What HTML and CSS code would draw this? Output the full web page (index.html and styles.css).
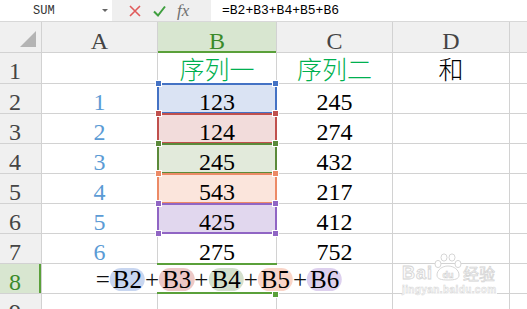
FILE: index.html
```html
<!DOCTYPE html>
<html lang="zh-CN">
<head>
<meta charset="utf-8">
<title>SUM</title>
<link rel="stylesheet" href="styles.css">
</head>
<body>
<div class="app">
  <div class="fbar">
    <div class="namebox"><span class="nb-text">SUM</span><span class="nb-arrow"></span></div>
    <div class="fbtns">
      <svg class="ic-x" width="12" height="12" viewBox="0 0 12 12"><path d="M1 1L11 11M11 1L1 11" stroke="#e05a5a" stroke-width="1.6" fill="none"/></svg>
      <svg class="ic-ok" width="13" height="12" viewBox="0 0 13 12"><path d="M1 6.5L5 10.5L12 1.5" stroke="#3f9f3f" stroke-width="2" fill="none"/></svg>
      <span class="fx">fx</span>
    </div>
    <div class="finput">=B2+B3+B4+B5+B6</div>
  </div>

  <div class="sheet">
    <div class="corner"><span class="tri"></span></div>
    <div class="ch">A</div>
    <div class="ch sel">B</div>
    <div class="ch">C</div>
    <div class="ch">D</div>
    <div class="ch"></div>

    <div class="rh">1</div>
    <div class="c"></div>
    <div class="c cjk green">序列一</div>
    <div class="c cjk green">序列二</div>
    <div class="c cjk">和</div>
    <div class="c"></div>

    <div class="rh">2</div>
    <div class="c a">1</div>
    <div class="c ref blue">123<i class="hd tl"></i><i class="hd tr"></i><i class="hd bl"></i><i class="hd br"></i></div>
    <div class="c">245</div>
    <div class="c"></div>
    <div class="c"></div>

    <div class="rh">3</div>
    <div class="c a">2</div>
    <div class="c ref red">124<i class="hd tl"></i><i class="hd tr"></i><i class="hd bl"></i><i class="hd br"></i></div>
    <div class="c">274</div>
    <div class="c"></div>
    <div class="c"></div>

    <div class="rh">4</div>
    <div class="c a">3</div>
    <div class="c ref grn">245<i class="hd tl"></i><i class="hd tr"></i><i class="hd bl"></i><i class="hd br"></i></div>
    <div class="c">432</div>
    <div class="c"></div>
    <div class="c"></div>

    <div class="rh">5</div>
    <div class="c a">4</div>
    <div class="c ref org">543<i class="hd tl"></i><i class="hd tr"></i><i class="hd bl"></i><i class="hd br"></i></div>
    <div class="c">217</div>
    <div class="c"></div>
    <div class="c"></div>

    <div class="rh">6</div>
    <div class="c a">5</div>
    <div class="c ref pur">425<i class="hd tl"></i><i class="hd tr"></i><i class="hd bl"></i><i class="hd br"></i></div>
    <div class="c">412</div>
    <div class="c"></div>
    <div class="c"></div>

    <div class="rh">7</div>
    <div class="c a">6</div>
    <div class="c">275</div>
    <div class="c">752</div>
    <div class="c"></div>
    <div class="c"></div>

    <div class="rh sel">8</div>
    <div class="c"></div>
    <div class="c active">
      <div class="editor">
        <span class="op">=</span><span class="pill p-blue">B2</span><span class="op">+</span><span class="pill p-red">B3</span><span class="op">+</span><span class="pill p-grn">B4</span><span class="op">+</span><span class="pill p-org">B5</span><span class="op">+</span><span class="pill p-pur">B6</span>
      </div>
      <i class="fill"></i>
    </div>
    <div class="c"></div>
    <div class="c"></div>
    <div class="c"></div>

    <div class="rh">9</div>
    <div class="c"></div>
    <div class="c"></div>
    <div class="c"></div>
    <div class="c"></div>
    <div class="c"></div>
  </div>

  <div class="wm">
    <div class="wm-top">
      <span class="wm-bai">Bai</span>
      <svg class="wm-paw" width="30" height="28" viewBox="0 0 30 28">
        <g fill="#fff" stroke="#d6d6d6" stroke-width="1">
          <ellipse cx="5" cy="11" rx="3" ry="3.6"/>
          <ellipse cx="11" cy="4.5" rx="3" ry="3.6"/>
          <ellipse cx="19" cy="4.5" rx="3" ry="3.6"/>
          <ellipse cx="25" cy="11" rx="3" ry="3.6"/>
          <path d="M4 22C4 17 9 13 15 13C21 13 26 17 26 22C26 26 22 27 15 27C8 27 4 26 4 22Z"/>
        </g>
        <text x="15" y="25" text-anchor="middle" class="wm-du">du</text>
      </svg>
      <span class="wm-jy">经验</span>
    </div>
    <div class="wm-url">jingyan.baidu.com</div>
  </div>
</div>
</body>
</html>
```

FILE: styles.css
```css
html, body {
  margin: 0;
  padding: 0;
  background: #fff;
  overflow: hidden;
}

.app {
  position: relative;
  width: 527px;
  height: 309px;
  overflow: hidden;
}

/* formula bar */
.fbar {
  display: flex;
  height: 21px;
  background: #fff;
}

.namebox {
  width: 112px;
  display: flex;
  align-items: center;
}

.nb-text {
  font: 12px "Liberation Mono", monospace;
  color: #333;
  margin-left: 33px;
}

.nb-arrow {
  margin-left: auto;
  margin-right: 4px;
  width: 0;
  height: 0;
  border-left: 3px solid transparent;
  border-right: 3px solid transparent;
  border-top: 3px solid #666;
}

.fbtns {
  width: 99px;
  background: #efefef;
  display: flex;
  align-items: center;
  padding-left: 17px;
  box-sizing: border-box;
}

.ic-x { margin-right: 12px; }
.ic-ok { margin-right: 11px; }

.fx {
  font: italic 17px "Liberation Serif", serif;
  color: #707070;
  line-height: 21px;
}

.finput {
  flex: 1;
  padding-left: 11px;
  font: 13px "Liberation Mono", monospace;
  line-height: 22px;
  color: #000;
}

/* sheet grid */
.sheet {
  display: grid;
  grid-template-columns: 41px 115px 118px 115px 116px 1fr;
  grid-template-rows: 30px 30px repeat(8, 29px);
  gap: 1px;
  background: #d2d2d2;
  border-top: 1px solid #d8d8d8;
}

.corner {
  background: #f0f0f0;
  display: flex;
  justify-content: flex-end;
  align-items: flex-end;
  padding: 0 5px 5px 0;
}

.tri {
  width: 16px;
  height: 16px;
  background: #b4b4b4;
  clip-path: polygon(100% 0, 100% 100%, 0 100%);
}

.ch {
  background: #f0f0f0;
  color: #444;
  font: 24px "Liberation Serif", serif;
  line-height: 22px;
  padding-top: 8px;
  text-align: center;
}

.ch.sel {
  position: relative;
  background: #d8e6d0;
  color: #3a8a2a;
}

.ch.sel::after {
  content: "";
  position: absolute;
  left: 0;
  right: 0;
  bottom: -1px;
  height: 2px;
  background: #5aa03a;
}

.rh {
  background: #f0f0f0;
  color: #444;
  font: 24px "Liberation Serif", serif;
  line-height: 22px;
  padding-top: 7px;
  padding-left: 9px;
  white-space: nowrap;
}

.rh.sel {
  background: #d8e6d0;
  color: #3a8a2a;
  box-shadow: inset -2px 0 #5aa03a;
}

.c {
  background: #fff;
  color: #000;
  font: 24px "Liberation Serif", serif;
  line-height: 22px;
  padding-top: 7px;
  text-align: center;
  white-space: nowrap;
}

.c.a { color: #5b9bd5; }

.c.cjk {
  font: 25px "Noto Sans CJK SC", sans-serif;
  font-weight: 300;
  line-height: 25px;
  padding-top: 3px;
}

.c.green { color: #00b050; }

/* reference boxes */
.ref { position: relative; }

.ref::before {
  content: "";
  position: absolute;
  inset: -1px;
  border: 2px solid var(--rc);
}

.hd {
  position: absolute;
  width: 5px;
  height: 5px;
  background: var(--rc);
  border: 1px solid #fff;
}

.tl { left: -3px; top: -4px; }
.tr { right: -3px; top: -4px; }
.bl { left: -3px; bottom: -4px; }
.br { right: -3px; bottom: -4px; }

.blue { --rc: #4472c4; background: #dae3f3; }
.red  { --rc: #c0504d; background: #f2dcdb; }
.grn  { --rc: #5b8a3a; background: #e2eadb; }
.org  { --rc: #ec8a66; background: #fbe5dc; }
.pur  { --rc: #9065c4; background: #e1d7ee; }

/* active cell with in-cell editor */
.active {
  position: relative;
  padding-top: 0;
}

.active::after {
  content: "";
  position: absolute;
  left: -1px;
  right: -1px;
  top: -1px;
  bottom: -1px;
  border-top: 2px solid #5aa03a;
  border-bottom: 2px solid #5aa03a;
  z-index: 2;
}

.editor {
  position: absolute;
  top: 0;
  bottom: 0;
  left: 50%;
  margin-left: 2px;
  transform: translateX(-50%);
  background: #fff;
  display: flex;
  align-items: flex-start;
  padding-top: 4px;
  box-sizing: border-box;
  font: 25px "Liberation Serif", serif;
  line-height: 23px;
  z-index: 1;
}

.op { color: #111; }

.pill {
  padding: 0 3px;
  border-radius: 12px;
  height: 23px;
}

.p-blue { background: #c8d6f0; }
.p-red  { background: #ecc8c6; }
.p-grn  { background: #d3dfcc; }
.p-org  { background: #f9d5c8; }
.p-pur  { background: #ddd0ee; }

.fill {
  position: absolute;
  right: -3px;
  bottom: -5px;
  width: 5px;
  height: 5px;
  background: #5aa03a;
  border: 1px solid #fff;
  z-index: 3;
}

/* watermark */
.wm {
  position: absolute;
  left: 402px;
  top: 253px;
  font-family: "Liberation Sans", sans-serif;
}

.wm-top {
  display: flex;
  align-items: flex-end;
}

.wm-bai {
  font: bold 18px "Liberation Sans", sans-serif;
  line-height: 15px;
  color: #fbfbfb;
  -webkit-text-stroke: 0.8px #d4d4d4;
  letter-spacing: 1px;
}

.wm-du {
  font: bold 9px "Liberation Sans", sans-serif;
  fill: #fff;
  stroke: #d0d0d0;
  stroke-width: 0.6;
}

.wm-jy {
  font: 16px "Noto Sans CJK SC", sans-serif;
  line-height: 16px;
  color: #fbfbfb;
  -webkit-text-stroke: 0.7px #d4d4d4;
}

.wm-url {
  font: bold 10px "Liberation Sans", sans-serif;
  line-height: 11px;
  margin-top: 3px;
  color: #fbfbfb;
  -webkit-text-stroke: 0.5px #d6d6d6;
  background: rgba(255, 255, 255, 0.85);
  letter-spacing: 0.4px;
}
```
